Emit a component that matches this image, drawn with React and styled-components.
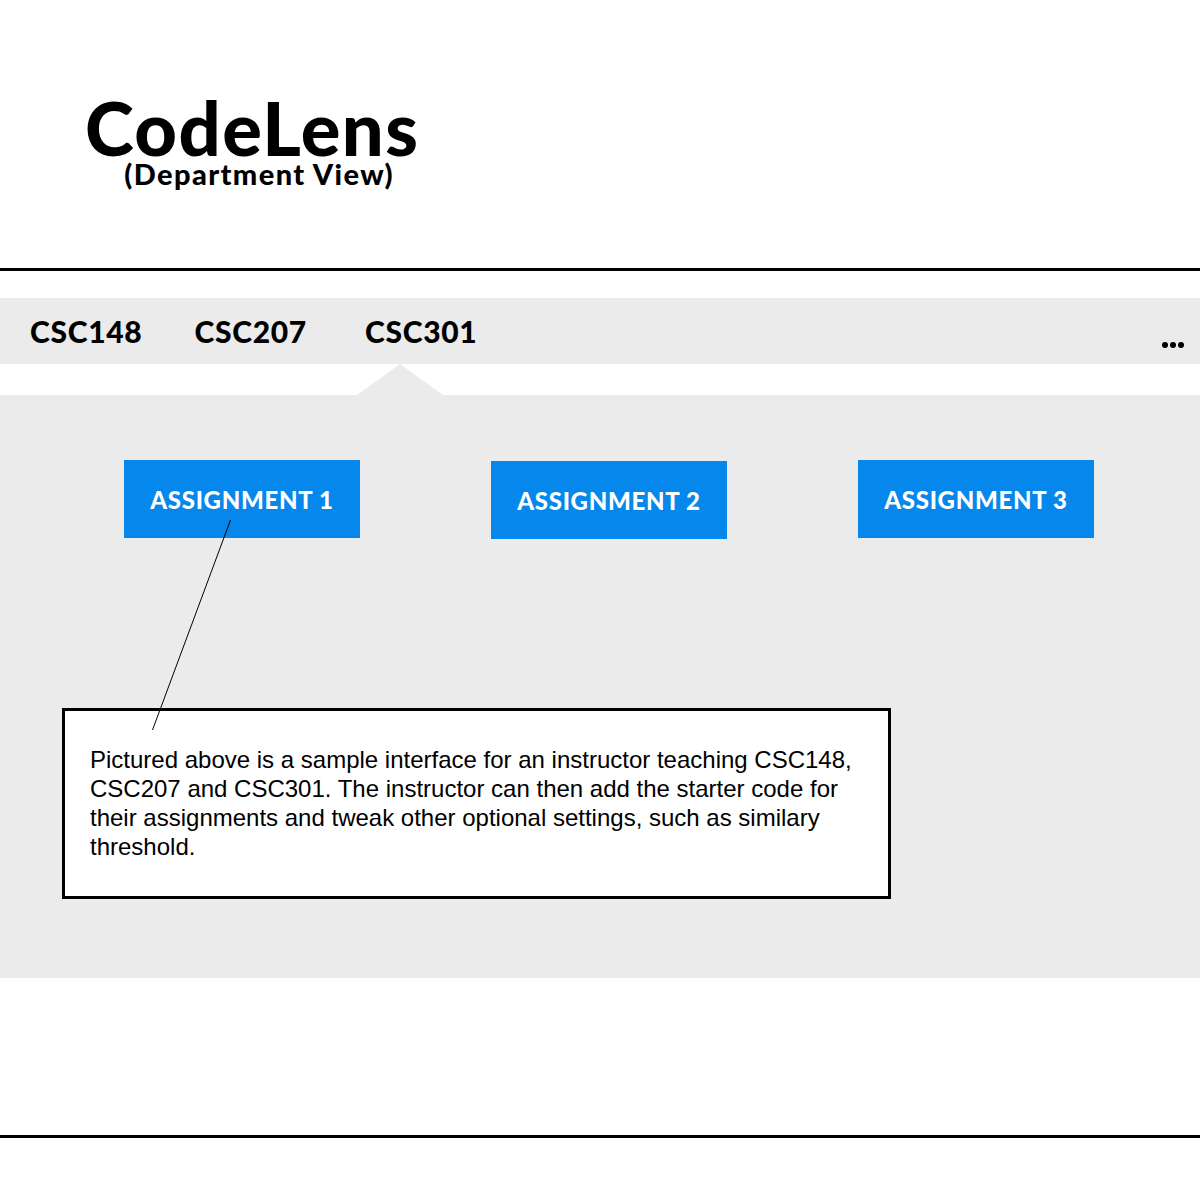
import React from 'react';
import styled, { createGlobalStyle } from 'styled-components';

const GlobalStyle = createGlobalStyle`
  body {
    margin: 0;
    background: #ffffff;
    font-family: Lato, "Noto Sans", sans-serif;
  }
`;

const Page = styled.div`
  width: 1200px;
  height: 1200px;
  display: flex;
  flex-direction: column;
  overflow: hidden;
`;

const Header = styled.header`
  height: 268px;
  box-sizing: border-box;
  padding: 97px 0 0 85px;
`;

const Logo = styled.div`
  display: inline-flex;
  flex-direction: column;
  align-items: center;
  color: #000;
`;

const Title = styled.h1`
  margin: 0;
  font-family: Lato, sans-serif;
  font-weight: 900;
  font-size: 74px;
  line-height: 62px;
  letter-spacing: 1.4px;
`;

const Subtitle = styled.span`
  margin-left: 14px;
  font-family: Lato, sans-serif;
  font-weight: 900;
  font-size: 29px;
  line-height: 30px;
  letter-spacing: 1.4px;
`;

const Rule = styled.hr`
  margin: 0;
  border: none;
  height: 3px;
  background: #000;
  flex-shrink: 0;
`;

const TabBar = styled.nav`
  margin-top: 27px;
  height: 66px;
  background: #ebebeb;
  display: flex;
  align-items: center;
  padding: 0 16px 0 30px;
`;

const Tab = styled.span`
  font-family: Lato, sans-serif;
  font-weight: 900;
  font-size: 30px;
  letter-spacing: 0.7px;
  color: #000;
  margin-right: ${props => props.gap}px;
`;

const More = styled.div`
  margin-left: auto;
  align-self: flex-end;
  margin-bottom: 16px;
  display: flex;
  gap: 2px;
`;

const Dot = styled.span`
  width: 6px;
  height: 6px;
  border-radius: 50%;
  background: #000;
`;

const NotchStrip = styled.div`
  height: 31px;
  padding-left: 357px;
  display: flex;
  align-items: flex-end;
`;

const Notch = styled.div`
  width: 86px;
  height: 31px;
  background: #ebebeb;
  clip-path: polygon(50% 0, 100% 100%, 0 100%);
`;

const Content = styled.section`
  position: relative;
  height: 583px;
  background: #ebebeb;
  box-sizing: border-box;
  padding: 65px 0 0 62px;
`;

const ButtonRow = styled.div`
  display: flex;
  gap: 131px;
  padding-left: 62px;
`;

const AssignmentButton = styled.button`
  width: 236px;
  height: 78px;
  border: none;
  background: #0587ec;
  color: #fff;
  font-family: Lato, sans-serif;
  font-weight: 900;
  font-size: 24px;
  letter-spacing: 0.7px;
  padding: 0;
  margin-top: ${props => props.offset}px;
`;

const Note = styled.div`
  margin-top: 169px;
  width: 829px;
  height: 191px;
  box-sizing: border-box;
  border: 3px solid #000;
  background: #fff;
  padding: 34px 20px 0 25px;
  font-family: "Liberation Sans", Arial, sans-serif;
  font-size: 24px;
  line-height: 29px;
  color: #000;
`;

const Connector = styled.svg`
  position: absolute;
  left: 0;
  top: 0;
  pointer-events: none;
`;

const Footer = styled.div`
  height: 157px;
`;

const courses = [
  { name: 'CSC148', gap: 52 },
  { name: 'CSC207', gap: 58 },
  { name: 'CSC301', gap: 0 },
];

const assignments = [
  { name: 'ASSIGNMENT 1', offset: 0 },
  { name: 'ASSIGNMENT 2', offset: 1 },
  { name: 'ASSIGNMENT 3', offset: 0 },
];

export default function App() {
  return (
    <Page>
      <GlobalStyle />
      <Header>
        <Logo>
          <Title>CodeLens</Title>
          <Subtitle>(Department View)</Subtitle>
        </Logo>
      </Header>
      <Rule />
      <TabBar>
        {courses.map(c => (
          <Tab key={c.name} gap={c.gap}>{c.name}</Tab>
        ))}
        <More aria-label="more">
          <Dot />
          <Dot />
          <Dot />
        </More>
      </TabBar>
      <NotchStrip>
        <Notch />
      </NotchStrip>
      <Content>
        <ButtonRow>
          {assignments.map(a => (
            <AssignmentButton key={a.name} offset={a.offset}>{a.name}</AssignmentButton>
          ))}
        </ButtonRow>
        <Note>
          Pictured above is a sample interface for an instructor teaching CSC148,
          CSC207 and CSC301. The instructor can then add the starter code for
          their assignments and tweak other optional settings, such as similary
          threshold.
        </Note>
        <Connector width="1200" height="583">
          <line x1="230.5" y1="125" x2="152.5" y2="335" stroke="#000" strokeWidth="1" />
        </Connector>
      </Content>
      <Footer />
      <Rule />
    </Page>
  );
}
